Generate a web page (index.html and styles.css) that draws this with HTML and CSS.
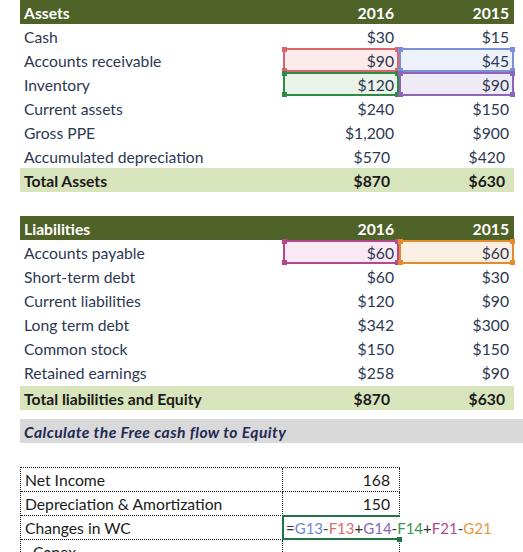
FILE: index.html
```html
<!DOCTYPE html>
<html lang="en">
<head>
    <meta charset="UTF-8">
    <meta name="viewport" content="width=device-width, initial-scale=1.0">
    <title>Free Cash Flow to Equity</title>
    <link rel="stylesheet" href="styles.css">
</head>
<body>
    <div class="sheet">
        <!-- Assets -->
        <div class="block">
            <div class="row head"><div class="cell label">Assets</div><div class="cell num">2016</div><div class="cell num">2015</div></div>
            <div class="row"><div class="cell label">Cash</div><div class="cell num">$30</div><div class="cell num">$15</div></div>
            <div class="row"><div class="cell label">Accounts receivable</div><div class="cell num ref red">$90</div><div class="cell num ref blue">$45</div></div>
            <div class="row"><div class="cell label">Inventory</div><div class="cell num ref green">$120</div><div class="cell num ref purple">$90</div></div>
            <div class="row"><div class="cell label">Current assets</div><div class="cell num">$240</div><div class="cell num">$150</div></div>
            <div class="row"><div class="cell label">Gross PPE</div><div class="cell num">$1,200</div><div class="cell num">$900</div></div>
            <div class="row"><div class="cell label">Accumulated depreciation</div><div class="cell num pad">$570</div><div class="cell num pad">$420</div></div>
            <div class="row total"><div class="cell label">Total Assets</div><div class="cell num pad">$870</div><div class="cell num pad">$630</div></div>
        </div>

        <!-- Liabilities -->
        <div class="block liab">
            <div class="row head"><div class="cell label">Liabilities</div><div class="cell num">2016</div><div class="cell num">2015</div></div>
            <div class="row"><div class="cell label">Accounts payable</div><div class="cell num ref magenta">$60</div><div class="cell num ref orange">$60</div></div>
            <div class="row"><div class="cell label">Short-term debt</div><div class="cell num">$60</div><div class="cell num">$30</div></div>
            <div class="row"><div class="cell label">Current liabilities</div><div class="cell num">$120</div><div class="cell num">$90</div></div>
            <div class="row"><div class="cell label">Long term debt</div><div class="cell num">$342</div><div class="cell num">$300</div></div>
            <div class="row"><div class="cell label">Common stock</div><div class="cell num">$150</div><div class="cell num">$150</div></div>
            <div class="row"><div class="cell label">Retained earnings</div><div class="cell num">$258</div><div class="cell num">$90</div></div>
            <div class="row total"><div class="cell label">Total liabilities and Equity</div><div class="cell num pad">$870</div><div class="cell num pad">$630</div></div>
        </div>

        <div class="task">Calculate the Free cash flow to Equity</div>

        <!-- FCFE worksheet -->
        <div class="calc">
            <div class="calc-row"><div class="cell label">Net Income</div><div class="cell num pad">168</div></div>
            <div class="calc-row"><div class="cell label">Depreciation &amp; Amortization</div><div class="cell num pad">150</div></div>
            <div class="calc-row"><div class="cell label">Changes in WC</div><div class="cell formula editing"><span class="op">=</span><span class="f-blue">G13</span><span class="op">-</span><span class="f-red">F13</span><span class="op">+</span><span class="f-purple">G14</span><span class="op">-</span><span class="f-green">F14</span><span class="op">+</span><span class="f-magenta">F21</span><span class="op">-</span><span class="f-orange">G21</span><span class="caret"></span></div></div>
            <div class="calc-row"><div class="cell label indent">Capex</div><div class="cell num pad"></div></div>
        </div>
    </div>
</body>
</html>
```

FILE: styles.css
```css
* {
    margin: 0;
    padding: 0;
    box-sizing: border-box;
}

body {
    font-family: Lato, 'Noto Sans', sans-serif;
    font-size: 15.7px;
    color: #2c3852;
    background: white;
    overflow: hidden;
}

.sheet {
    padding-left: 20px;
}

.block {
    width: 494px;
}

.block.liab {
    margin-top: 24px;
}

.row {
    display: grid;
    grid-template-columns: 263px 116px 115px;
    height: 24px;
}

.liab .row.total {
    margin-top: 2px;
}

.cell {
    display: flex;
    align-items: center;
    padding: 1px 4px 0;
    white-space: nowrap;
    position: relative;
}

.num {
    justify-content: flex-end;
    padding-right: 5px;
}

.num.pad {
    padding-right: 9px;
}

.head {
    background: #4f6228;
    color: white;
    font-weight: bold;
}

.total {
    background: #d8e4bc;
    color: #1a1a1a;
    font-weight: bold;
}

/* formula reference boxes */
.ref {
    border: 2px solid var(--c);
    background: var(--bg);
    padding-right: 3px;
}

.ref::before,
.ref::after {
    content: '';
    position: absolute;
    left: -3px;
    right: -3px;
    height: 5px;
    background: linear-gradient(to right, var(--c) 5px, transparent 5px, transparent calc(100% - 5px), var(--c) calc(100% - 5px));
}

.ref::before { top: -3px; }
.ref::after { bottom: -3px; }

.red { --c: #d9646a; --bg: #fdeaea; }
.blue { --c: #7a8fd6; --bg: #edf1fb; }
.green { --c: #2f8a46; --bg: #e9f3ea; }
.purple { --c: #8c64b8; --bg: #efebf6; }
.magenta { --c: #b5478f; --bg: #f9e9f4; }
.orange { --c: #e58b2b; --bg: #fcf0e4; }

.task {
    margin-top: 9px;
    height: 24px;
    background: #d9d9d9;
    font-weight: bold;
    font-style: italic;
    letter-spacing: 0.4px;
    color: #1f2a55;
    display: flex;
    align-items: center;
    padding: 1px 0 0 4px;
}

.calc {
    margin-top: 24px;
    width: 380px;
    border-top: 1px dotted #222;
    border-left: 1px dotted #222;
}

.calc-row {
    display: grid;
    grid-template-columns: 262px 117px;
    height: 24px;
}

.calc-row .cell {
    border-right: 1px dotted #222;
    border-bottom: 1px dotted #222;
    color: #1a1a1a;
}

.indent {
    padding-left: 12px;
}

.calc-row .formula {
    overflow: visible;
    padding-left: 3px;
    font-size: 15px;
    border-right-color: transparent;
    z-index: 1;
}

.editing::after {
    content: '';
    position: absolute;
    left: -1px;
    top: -1px;
    right: -1px;
    bottom: -1px;
    border: 2px solid #217346;
    border-right: none;
}

.editing::before {
    content: '';
    position: absolute;
    right: -3px;
    bottom: -3px;
    width: 5px;
    height: 5px;
    background: #217346;
}

.op { color: #333; }
.f-blue { color: #6f86cf; }
.f-red { color: #e06a70; }
.f-purple { color: #8a63b6; }
.f-green { color: #3c9152; }
.f-magenta { color: #b14a90; }
.f-orange { color: #e79640; }

.caret {
    display: inline-block;
    width: 1px;
    height: 18px;
    background: #000;
    margin-left: 1px;
}
```
